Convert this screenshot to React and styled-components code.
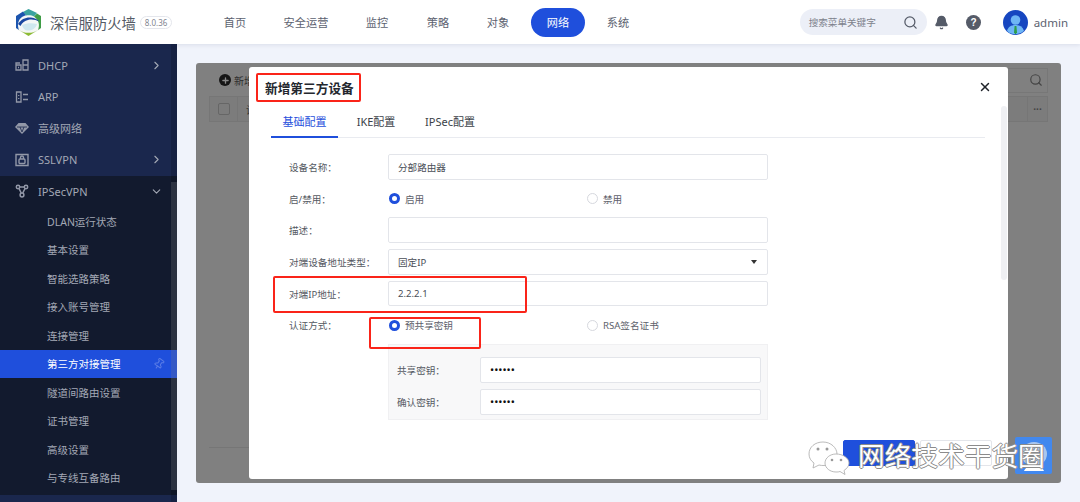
import React from "react";
import styled, { createGlobalStyle } from "styled-components";
import { ChevronRight, ChevronDown, Search, Bell, Pin, X, Plus } from "lucide-react";

const GlobalStyle = createGlobalStyle`
  html, body {
    margin: 0;
    height: 100%;
    overflow: hidden;
    background: #f0f3fb;
    font-family: "Noto Sans", "Noto Sans CJK SC", sans-serif;
  }
  * { box-sizing: border-box; }
`;

const Page = styled.div`
  width: 1080px;
  height: 502px;
  display: flex;
  flex-direction: column;
  position: relative;
  overflow: hidden;
`;

const Header = styled.header`
  height: 44px;
  flex: none;
  background: #fff;
  display: flex;
  align-items: center;
  padding: 0 12px 0 14px;
  box-shadow: 0 1px 4px rgba(30, 40, 80, 0.1);
  position: relative;
  z-index: 2;
`;

const Brand = styled.div`
  width: 192px;
  display: flex;
  align-items: center;
  flex: none;
`;

const BrandName = styled.span`
  font-size: 14.3px;
  color: #555b66;
  margin-left: 7px;
  white-space: nowrap;
`;

const Version = styled.span`
  font-size: 8px;
  color: #7f8590;
  border: 1px solid #e4e6ec;
  border-radius: 7px;
  height: 13px;
  line-height: 11px;
  padding: 0 4px;
  margin-left: 4px;
`;

const TopNav = styled.nav`
  display: flex;
  align-items: center;
  flex: 1;
`;

const TopItem = styled.div`
  width: ${(p) => p.$w}px;
  margin-left: ${(p) => p.$ml || 0}px;
  height: 29px;
  line-height: 29px;
  text-align: center;
  font-size: 11.2px;
  color: ${(p) => (p.$active ? "#fff" : "#5c6270")};
  background: ${(p) => (p.$active ? "#1f4fdc" : "transparent")};
  border-radius: 15px;
  white-space: nowrap;
`;

const SearchBox = styled.div`
  width: 127px;
  height: 26px;
  border-radius: 13px;
  background: #eceff7;
  display: flex;
  align-items: center;
  justify-content: space-between;
  padding: 0 9px;
  font-size: 9.6px;
  color: #7d828c;
  flex: none;
`;

const IconSlot = styled.div`
  width: ${(p) => p.$w}px;
  display: flex;
  justify-content: center;
  flex: none;
  color: #555b68;
`;

const UserName = styled.span`
  font-size: 11.5px;
  color: #5c6270;
  margin-left: 6px;
`;

const Body = styled.div`
  flex: 1;
  display: flex;
  min-height: 0;
`;

const Sidebar = styled.aside`
  width: 177px;
  flex: none;
  background: #1a274d;
  padding-top: 5.500px;
  position: relative;
  overflow: hidden;
`;

const SideTrack = styled.div`
  position: absolute;
  top: 0;
  right: 0;
  width: 6px;
  height: 100%;
  background: rgba(0, 0, 0, 0.14);
`;

const SideThumb = styled.div`
  position: absolute;
  top: 138px;
  right: 0;
  width: 6px;
  height: 308px;
  background: rgba(255, 255, 255, 0.12);
`;

const GroupRow = styled.div`
  height: 31.500px;
  display: flex;
  align-items: center;
  padding: 0 14px 0 15px;
  color: #a3a8b5;
  font-size: 11px;
  background: ${(p) => (p.$open ? "#121a2e" : "transparent")};
`;

const GroupIcon = styled.span`
  width: 23px;
  display: flex;
  flex: none;
`;

const GroupLabel = styled.span`
  flex: 1;
`;

const SubList = styled.div`
  background: #121a2e;
  padding-bottom: 3px;
`;

const SubItem = styled.div`
  height: 28.500px;
  display: flex;
  align-items: center;
  justify-content: space-between;
  padding: 0 12px 0 47px;
  font-size: 10.500px;
  color: ${(p) => (p.$active ? "#fff" : "#a3a8b5")};
  background: ${(p) => (p.$active ? "#1f4fdc" : "transparent")};
`;

const Main = styled.main`
  flex: 1;
  padding: 19px;
`;

const Panel = styled.section`
  height: 420px;
  background: #808080;
  border-radius: 3px;
  position: relative;
  padding: 7px 13px 0 13px;
  overflow: hidden;
`;

const PanelTools = styled.div`
  display: flex;
  align-items: center;
  justify-content: space-between;
  height: 20px;
`;

const AddLink = styled.div`
  display: flex;
  align-items: center;
  gap: 3px;
  margin-left: 10px;
  font-size: 10px;
  color: #2e2e2e;
`;

const AddDot = styled.span`
  width: 12px;
  height: 12px;
  border-radius: 50%;
  background: #161616;
  color: #8a8a8a;
  display: flex;
  align-items: center;
  justify-content: center;
`;

const PanelSearch = styled.div`
  width: 60px;
  height: 25px;
  border: 1px solid #777;
  display: flex;
  align-items: center;
  justify-content: flex-end;
  padding-right: 4px;
  color: #444;
`;

const TableHead = styled.div`
  height: 26px;
  margin-top: 6px;
  background: #7c7c7c;
  border: 1px solid #767676;
  display: flex;
  align-items: center;
`;

const CheckCell = styled.div`
  width: 28px;
  height: 100%;
  flex: none;
  display: flex;
  align-items: center;
  justify-content: center;
  border-right: 1px solid #767676;
`;

const Check = styled.span`
  width: 12px;
  height: 12px;
  border: 1px solid #666;
  border-radius: 2px;
`;

const HeadText = styled.span`
  flex: 1;
  padding-left: 8px;
  font-size: 10px;
  color: #333;
`;

const DotsCell = styled.div`
  width: 20px;
  height: 100%;
  border-left: 1px solid #767676;
  display: flex;
  align-items: center;
  justify-content: center;
  font-size: 10px;
  font-weight: 700;
  color: #444;
`;

const TableFoot = styled.div`
  position: absolute;
  left: 13px;
  right: 13px;
  top: 384px;
  border-top: 1px solid #767676;
`;

const Modal = styled.div`
  position: absolute;
  left: 53px;
  top: 4px;
  width: 759px;
  height: 412px;
  background: #fff;
  border-radius: 3px;
  padding: 0 23px 0 22px;
  display: flex;
  flex-direction: column;
`;

const ModalScroll = styled.div`
  position: absolute;
  right: 1px;
  top: 39px;
  width: 6px;
  height: 174px;
  border-radius: 3px;
  background: #eff0f3;
`;

const ModalHead = styled.div`
  height: 40px;
  flex: none;
  display: flex;
  align-items: center;
  justify-content: space-between;
  font-size: 12.700px;
  font-weight: 700;
  color: #24272e;
  margin-left: -6px;
`;

const CloseBtn = styled.span`
  display: flex;
  color: #20232a;
  margin-right: -7px;
`;

const Tabs = styled.div`
  height: 31px;
  flex: none;
  display: flex;
  border-bottom: 1px solid #e9ebf0;
`;

const Tab = styled.div`
  width: ${(p) => p.$w}px;
  height: 31px;
  line-height: 30px;
  text-align: center;
  font-size: 11px;
  color: ${(p) => (p.$active ? "#1f4fdc" : "#3b3f48")};
  border-bottom: ${(p) => (p.$active ? "2px solid #1f4fdc" : "none")};
`;

const Form = styled.div`
  display: flex;
  flex-direction: column;
  gap: 6px;
  margin-top: 16px;
  width: 497px;
`;

const Row = styled.div`
  height: 25.700px;
  display: flex;
  align-items: center;
`;

const Label = styled.label`
  width: ${(p) => p.$w || 117}px;
  padding-left: ${(p) => p.$pad || 18}px;
  flex: none;
  font-size: 9.600px;
  color: #555962;
  white-space: nowrap;
`;

const Input = styled.div`
  flex: 1;
  height: 100%;
  border: 1px solid #e3e5ea;
  border-radius: 2px;
  background: #fff;
  display: flex;
  align-items: center;
  justify-content: space-between;
  padding: 0 9px;
  font-size: ${(p) => (p.$secret ? "11px" : "9.600px")};
  color: ${(p) => (p.$secret ? "#111" : "#4a4e57")};
`;

const Caret = styled.span`
  width: 0;
  height: 0;
  border-left: 3px solid transparent;
  border-right: 3px solid transparent;
  border-top: 4px solid #333;
  margin-right: 1px;
`;

const Radios = styled.div`
  display: flex;
  flex: 1;
`;

const Radio = styled.div`
  width: 198px;
  display: flex;
  align-items: center;
  gap: 5px;
  padding-left: 1px;
  font-size: 9.600px;
  color: #5d616b;
`;

const Dot = styled.span`
  width: 11px;
  height: 11px;
  border-radius: 50%;
  flex: none;
  background: #fff;
  border: ${(p) => (p.$on ? "3px solid #1f4fdc" : "1px solid #d6d8de")};
`;

const Nested = styled.div`
  margin-left: 117px;
  width: 380px;
  height: 76px;
  background: #f8f8f9;
  border: 1px solid #f0f0f2;
  padding: 12px 6px 0 0;
  display: flex;
  flex-direction: column;
  gap: 6px;
  flex: none;
`;

const Footer = styled.div`
  position: absolute;
  right: 16px;
  bottom: 13px;
  display: flex;
  gap: 5px;
`;

const Btn = styled.div`
  width: 72px;
  height: 26px;
  border-radius: 2px;
  background: ${(p) => (p.$primary ? "#1f4fdc" : "#fff")};
  border: 1px solid ${(p) => (p.$primary ? "#1f4fdc" : "#e3e5ea")};
`;

const Marker = styled.div`
  position: absolute;
  left: ${(p) => p.$x}px;
  top: ${(p) => p.$y}px;
  width: ${(p) => p.$w}px;
  height: ${(p) => p.$h}px;
  border: 2px solid #fa2419;
  border-radius: 2px;
  pointer-events: none;
  z-index: 5;
`;

const Watermark = styled.div`
  position: absolute;
  left: 808px;
  top: 437px;
  width: 244px;
  height: 42px;
  z-index: 6;
  pointer-events: none;
`;

const WechatMark = styled.svg`
  position: absolute;
  left: 0;
  top: 3px;
`;

const WaterAvatar = styled.svg`
  position: absolute;
  right: 0;
  top: 0;
`;

const WaterText = styled.span`
  position: absolute;
  left: 50px;
  top: 2px;
  font-size: 26.700px;
  line-height: 34px;
  color: #fff;
  white-space: nowrap;
  text-shadow: -1px 0 #8b8b8b, 1px 0 #8b8b8b, 0 -1px #8b8b8b, 0 1px #8b8b8b;
`;

const Logo = () => (
  <svg width="29" height="29" viewBox="0 0 29 29">
    <path d="M14.500 1 27 8v13l-12.500 7L2 21V8z" fill="#f4f7f6" />
    <path d="M14.500 1 9 4l3 3.500c3-.6 6-.2 8 1L23 5z" fill="#3aa3a0" />
    <path d="M23 5.500 27 8v12l-3 2c2-5 1-10-4-13.500z" fill="#3f9c46" />
    <path d="M9 3.500 2 8v12l3 2c-2-5-1-10 3-13 1-1 3-1.500 4-1.800z" fill="#1c55ae" />
    <path d="M4 16c3-5 8-7 13-6.500 4 .5 7 2 8 4-3-1.500-7-2.500-11-1.500-3 .8-6 2.500-7.500 6z" fill="#1a47a0" />
    <path d="M8 17c5-2 10-2 15-1-1 4-4.500 6.500-8.500 6.500S9 20.500 8 17z" fill="#cfe8ef" />
    <path d="M5 22l9.500 6 9.500-6c-3 2-6 2.800-9.500 2.800S8 24 5 22z" fill="#8dbb35" />
  </svg>
);

const Avatar = () => (
  <svg width="25" height="25" viewBox="0 0 25 25">
    <circle cx="12.500" cy="12.500" r="12.500" fill="#1646c0" />
    <circle cx="12.500" cy="10" r="4.800" fill="#6eb5f5" />
    <path d="M4 21c1-4 4-6 8.500-6s7.500 2 8.500 6a12.500 12.500 0 0 1-17 0z" fill="#6eb5f5" />
    <path d="M11.600 16h1.800l.6 6.500-1.500 2-1.500-2z" fill="#2b9e4a" />
  </svg>
);

const DhcpIcon = () => (
  <svg width="14" height="14" viewBox="0 0 14 14" fill="none" stroke="#9298a8" strokeWidth="1.300">
    <path d="M1 7V5h4M1 7h5v5H1zM8 2h5v10H8zM8 7h5M3 9.500h1" />
  </svg>
);

const ArpIcon = () => (
  <svg width="14" height="14" viewBox="0 0 14 14" fill="none" stroke="#9298a8" strokeWidth="1.300">
    <path d="M1.500 2h4.500v10H1.500zM3.700 5v1M3.700 8v1M8 4.500h5M8 9.500h5" />
  </svg>
);

const GemIcon = () => (
  <svg width="14" height="14" viewBox="0 0 14 14">
    <path d="M3.500 2h7L14 6l-7 7-7-7z" fill="#9298a8" />
    <path d="M2 6h10M5 6l2 5 2-5" fill="none" stroke="#1a274d" strokeWidth="0.800" />
  </svg>
);

const VpnIcon = () => (
  <svg width="14" height="14" viewBox="0 0 14 14" fill="none" stroke="#9298a8" strokeWidth="1.400">
    <path d="M1 1.500h12v11H1z" />
    <rect x="4" y="6" width="6" height="4.500" rx="1" />
    <path d="M5.500 6V4.500a1.500 1.500 0 0 1 3 0V6" />
  </svg>
);

const NetIcon = () => (
  <svg width="14" height="14" viewBox="0 0 14 14" fill="none" stroke="#9298a8" strokeWidth="1.500">
    <circle cx="3" cy="3" r="1.700" />
    <circle cx="11" cy="3" r="1.700" />
    <circle cx="7" cy="11" r="1.900" />
    <path d="M4.700 3h4.600M4 4.500 6.200 9M10 4.500 7.800 9" />
  </svg>
);

const HelpIcon = () => (
  <svg width="15" height="15" viewBox="0 0 15 15">
    <circle cx="7.500" cy="7.500" r="7.500" fill="#555b68" />
    <text x="7.500" y="11" textAnchor="middle" fontSize="10" fontWeight="700" fill="#fff" fontFamily="Liberation Sans">?</text>
  </svg>
);

const subItems = ["DLAN运行状态", "基本设置", "智能选路策略", "接入账号管理", "连接管理", "第三方对接管理", "隧道间路由设置", "证书管理", "高级设置", "与专线互备路由"];

const topItems = [
  ["首页", 58],
  ["安全运营", 84],
  ["监控", 58],
  ["策略", 64],
  ["对象", 56],
  ["网络", 54, 5],
  ["系统", 66],
];

export default function App() {
  return (
    <Page>
      <GlobalStyle />
      <Header>
        <Brand>
          <Logo />
          <BrandName>深信服防火墙</BrandName>
          <Version>8.0.36</Version>
        </Brand>
        <TopNav>
          {topItems.map(([name, w, ml]) => (
            <TopItem key={name} $w={w} $ml={ml} $active={name === "网络"}>{name}</TopItem>
          ))}
        </TopNav>
        <SearchBox>
          搜索菜单关键字
          <Search size={15} color="#555b68" />
        </SearchBox>
        <IconSlot $w={30}><Bell size={15} fill="#555b68" /></IconSlot>
        <IconSlot $w={34}><HelpIcon /></IconSlot>
        <IconSlot $w={12} />
        <Avatar />
        <UserName>admin</UserName>
      </Header>
      <Body>
        <Sidebar>
          <SideTrack />
          <GroupRow>
            <GroupIcon><DhcpIcon /></GroupIcon>
            <GroupLabel>DHCP</GroupLabel>
            <ChevronRight size={13} />
          </GroupRow>
          <GroupRow>
            <GroupIcon><ArpIcon /></GroupIcon>
            <GroupLabel>ARP</GroupLabel>
          </GroupRow>
          <GroupRow>
            <GroupIcon><GemIcon /></GroupIcon>
            <GroupLabel>高级网络</GroupLabel>
          </GroupRow>
          <GroupRow>
            <GroupIcon><VpnIcon /></GroupIcon>
            <GroupLabel>SSLVPN</GroupLabel>
            <ChevronRight size={13} />
          </GroupRow>
          <GroupRow $open>
            <GroupIcon><NetIcon /></GroupIcon>
            <GroupLabel>IPSecVPN</GroupLabel>
            <ChevronDown size={13} />
          </GroupRow>
          <SubList>
            {subItems.map((s) => (
              <SubItem key={s} $active={s === "第三方对接管理"}>
                {s}
                {s === "第三方对接管理" && <Pin size={12} color="#5a7ce6" style={{ transform: "rotate(35deg)" }} />}
              </SubItem>
            ))}
          </SubList>
          <SideThumb />
        </Sidebar>
        <Main>
          <Panel>
            <PanelTools>
              <AddLink>
                <AddDot><Plus size={9} strokeWidth={3.500} /></AddDot>
                新增
              </AddLink>
              <PanelSearch><Search size={14} /></PanelSearch>
            </PanelTools>
            <TableHead>
              <CheckCell><Check /></CheckCell>
              <HeadText>设备名称</HeadText>
              <DotsCell>···</DotsCell>
            </TableHead>
            <TableFoot />
            <Modal>
              <ModalHead>
                新增第三方设备
                <CloseBtn><X size={14} strokeWidth={2.500} /></CloseBtn>
              </ModalHead>
              <Tabs>
                <Tab $w={67} $active>基础配置</Tab>
                <Tab $w={76}>IKE配置</Tab>
                <Tab $w={72}>IPSec配置</Tab>
              </Tabs>
              <Form>
                <Row>
                  <Label>设备名称：</Label>
                  <Input>分部路由器</Input>
                </Row>
                <Row>
                  <Label>启/禁用：</Label>
                  <Radios>
                    <Radio><Dot $on />启用</Radio>
                    <Radio><Dot />禁用</Radio>
                  </Radios>
                </Row>
                <Row>
                  <Label>描述：</Label>
                  <Input />
                </Row>
                <Row>
                  <Label>对端设备地址类型：</Label>
                  <Input>
                    固定IP
                    <Caret />
                  </Input>
                </Row>
                <Row>
                  <Label>对端IP地址：</Label>
                  <Input>2.2.2.1</Input>
                </Row>
                <Row>
                  <Label>认证方式：</Label>
                  <Radios>
                    <Radio><Dot $on />预共享密钥</Radio>
                    <Radio><Dot />RSA签名证书</Radio>
                  </Radios>
                </Row>
                <Nested>
                  <Row>
                    <Label $w={91} $pad={8}>共享密钥：</Label>
                    <Input $secret>••••••</Input>
                  </Row>
                  <Row>
                    <Label $w={91} $pad={8}>确认密钥：</Label>
                    <Input $secret>••••••</Input>
                  </Row>
                </Nested>
              </Form>
              <ModalScroll />
              <Footer>
                <Btn $primary />
                <Btn />
              </Footer>
            </Modal>
          </Panel>
        </Main>
      </Body>
      <Marker $x={256} $y={73} $w={105} $h={29} />
      <Marker $x={273} $y={276} $w={254} $h={37} />
      <Marker $x={369} $y={317} $w={112} $h={32} />
      <Watermark>
        <WechatMark width="42" height="40" viewBox="0 0 42 40">
          <path d="M15 2C7 2 1 7 1 14c0 4 2 7 5 9l-1 5 6-3c2 .5 3 .5 5 .5C23 25.500 29 20 29 14S23 2 15 2z" fill="#fff" stroke="#aaa" strokeWidth="0.800" />
          <path d="M28 14c-6 0-11 4-11 9s5 9 11 9c1.500 0 3 0 4-.5l5 3-1-4c3-2 5-4.500 5-7.500 0-5-6-9-13-9z" fill="#fff" stroke="#aaa" strokeWidth="0.800" />
          <circle cx="10" cy="9" r="1.500" fill="#999" />
          <circle cx="19" cy="9" r="1.500" fill="#999" />
          <circle cx="24" cy="20" r="1.300" fill="#999" />
          <circle cx="33" cy="20" r="1.300" fill="#999" />
        </WechatMark>
        <WaterAvatar width="37" height="37" viewBox="0 0 37 37">
          <rect width="37" height="37" rx="2" fill="#4288ee" />
          <ellipse cx="19" cy="17" rx="13" ry="12" fill="#a9c6ee" />
          <path d="M10 17c3-5 15-6 18 0-3-1-15-1-18 0z" fill="#5b82c4" />
          <path d="M9 34c2-4 5-6 10-6s8 2 10 6z" fill="#fff" />
        </WaterAvatar>
        <WaterText>网络技术干货圈</WaterText>
      </Watermark>
    </Page>
  );
}
